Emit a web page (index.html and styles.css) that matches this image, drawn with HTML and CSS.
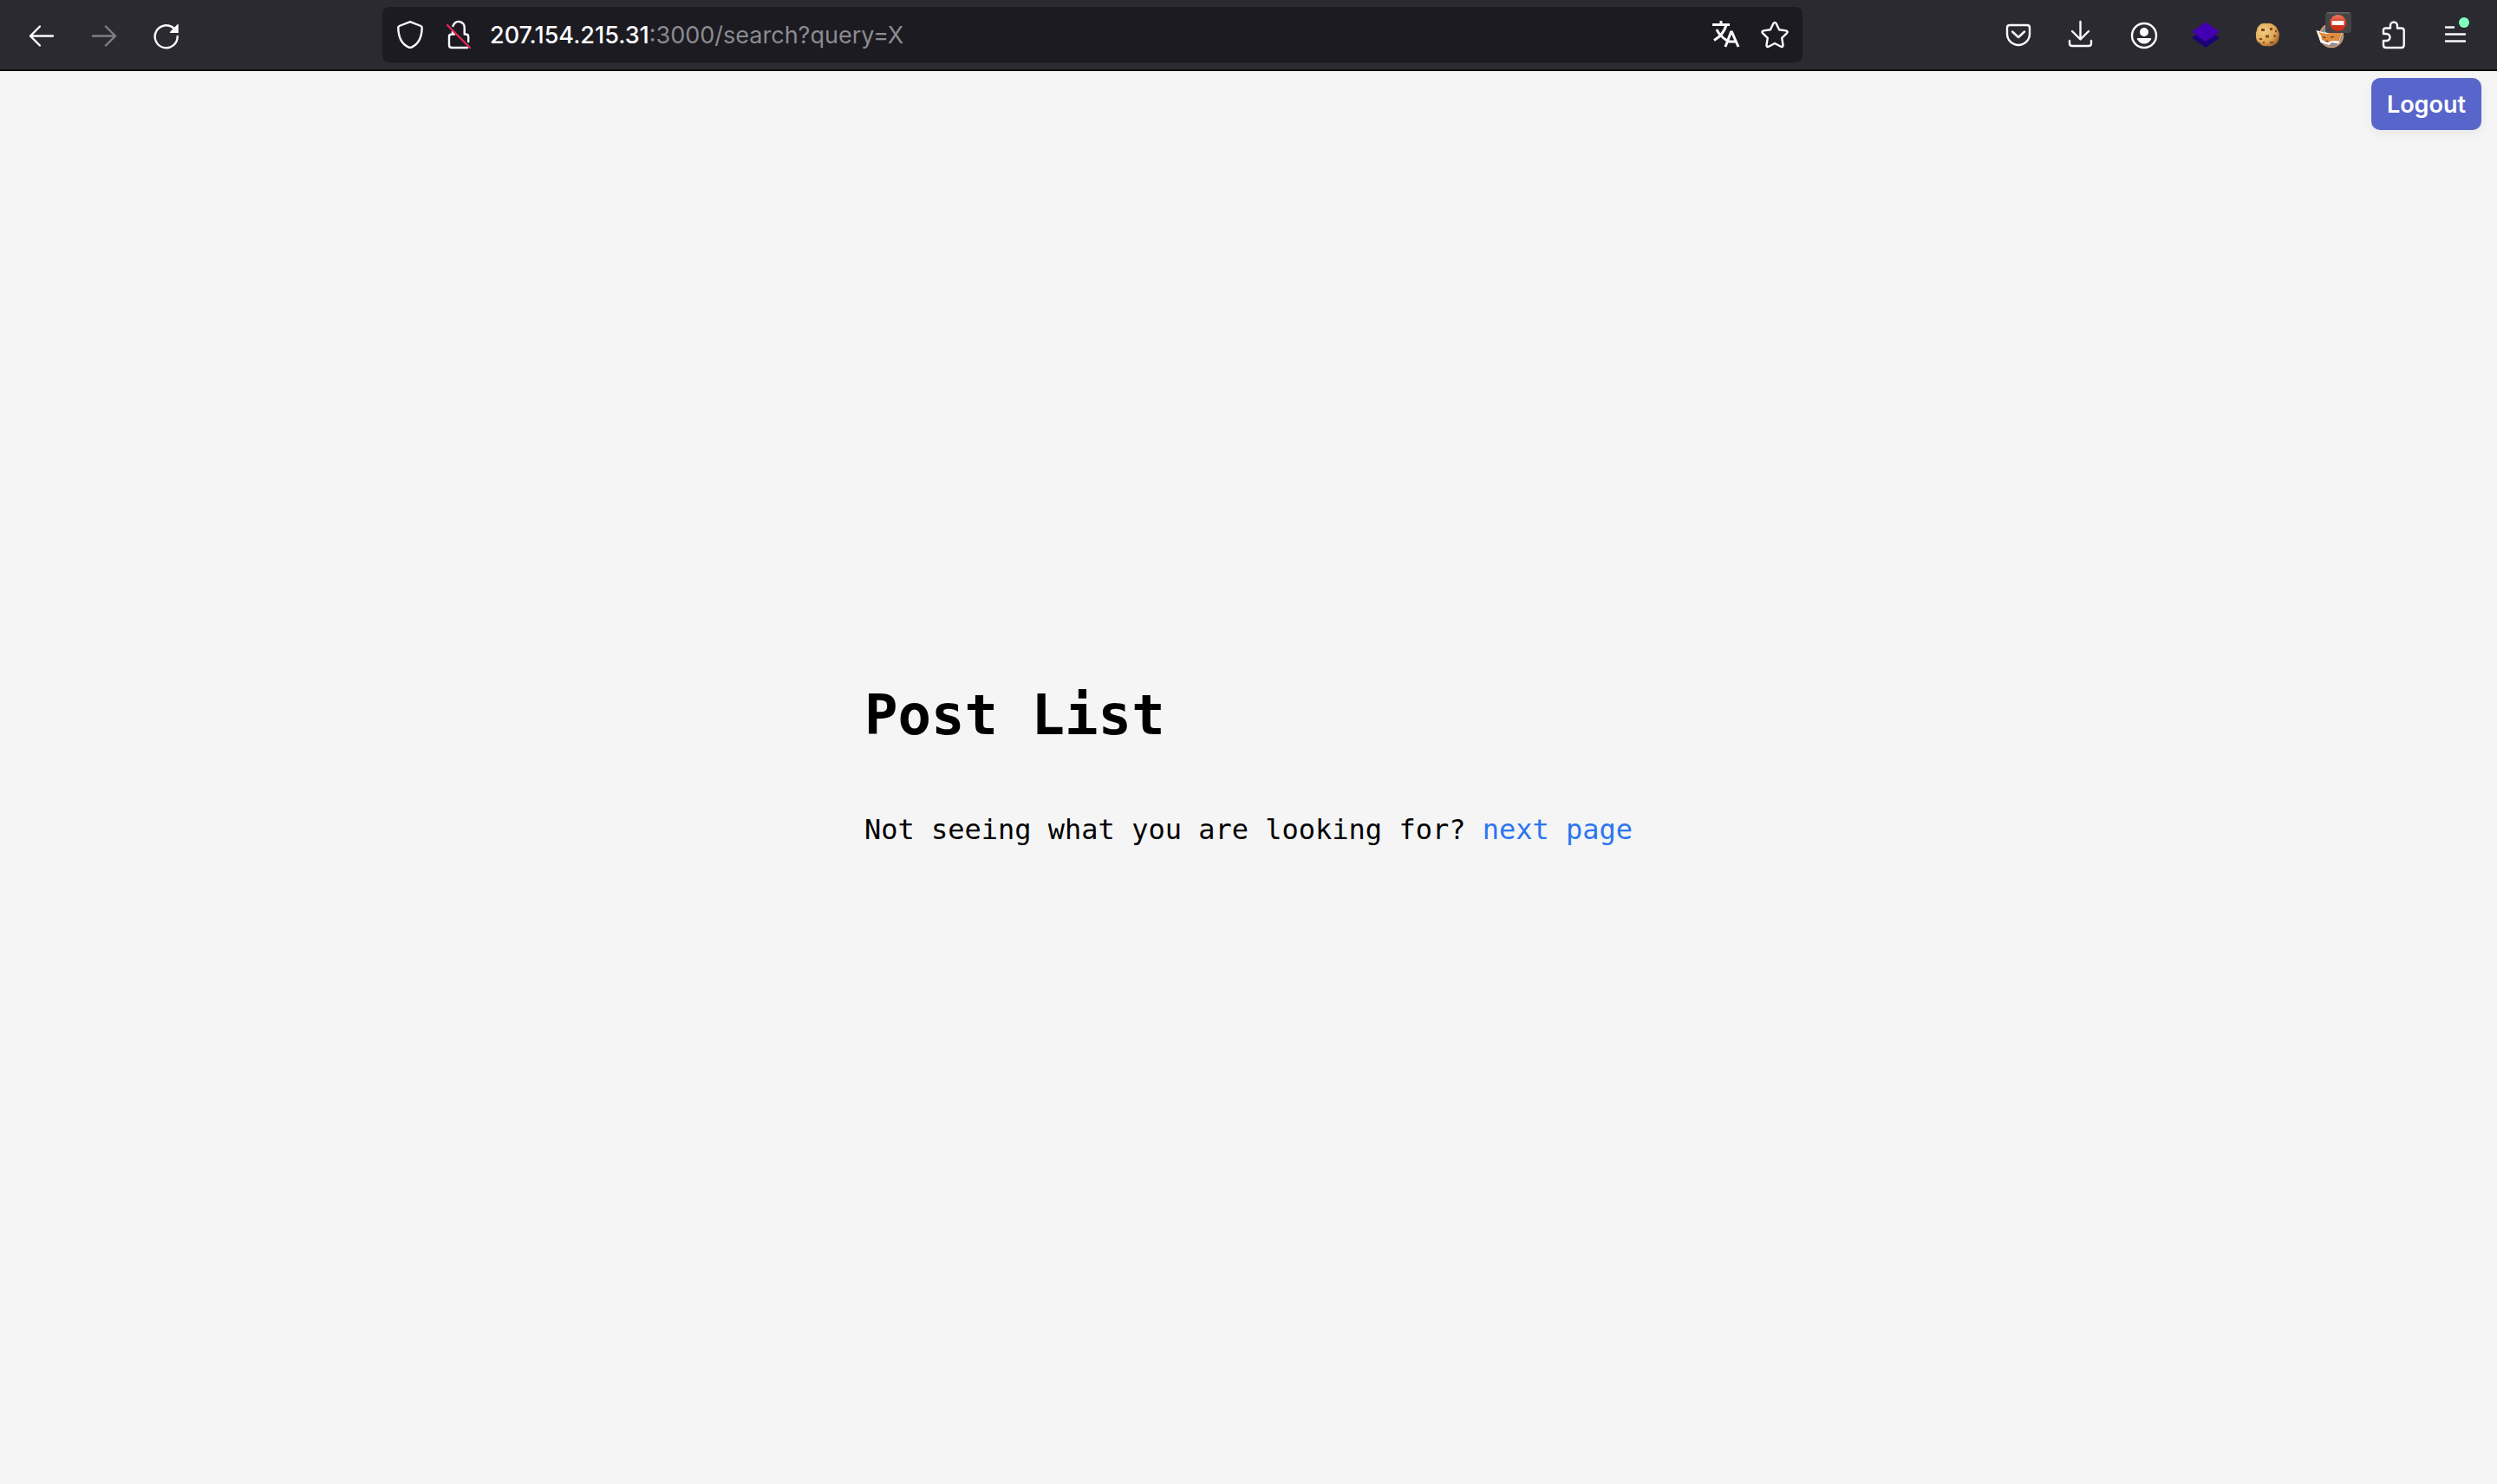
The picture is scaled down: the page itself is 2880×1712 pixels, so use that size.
FILE: index.html
```html
<!DOCTYPE html>
<html lang="en">
<head>
<meta charset="utf-8">
<title>Post List</title>
<link rel="stylesheet" href="styles.css">
</head>
<body>
<header class="toolbar">
  <nav class="tools" aria-label="Navigation">
    <button class="tool" aria-label="Back"><svg class="icon" viewBox="0 0 40 40"><path d="M33 21.500H7.500M18 10.500L7 21.500l11 11"/></svg></button>
    <button class="tool" aria-label="Forward" disabled><svg class="icon" viewBox="0 0 40 40"><path d="M7 21.500h25.500M22 10.500l11 11-11 11"/></svg></button>
    <button class="tool" aria-label="Reload"><svg class="icon" viewBox="0 0 40 40"><path d="M32.700 22A13 13 0 1 1 28.500 12.700"/><path class="solid" d="M33.800 8.500V18h-9.300q-1.200-.2-.3-1.300l8.300-8.400q1.200-.8 1.300.2z"/></svg></button>
  </nav>
  <div class="spacer"></div>
  <form class="urlbar">
    <button type="button" class="inner-tool" aria-label="Tracking protection"><svg class="icon" viewBox="0 0 40 40"><path d="M20 5.200L32.500 10q1.300.5 1.200 2C33.500 24 29 31 22 34.400q-2 1-4 0C11 31 6.500 24 6.300 12q-.1-1.500 1.200-2z"/></svg></button>
    <button type="button" class="inner-tool" aria-label="Connection not secure"><svg class="icon" viewBox="0 0 40 40"><path d="M13.500 10a6.700 6.700 0 0 1 13.200 2v7.500h1.500q3 0 3 3V28M15 19.500h-3q-3 0-3 3V32q0 3 3 3h18M13 16v3.500"/><path class="slash" d="M7 9l26 26"/></svg></button>
    <label class="address"><span class="host">207.154.215.31</span><input class="path" type="text" value=":3000/search?query=X" aria-label="Address"></label>
    <button type="button" class="inner-tool" aria-label="Translate"><svg class="icon glyph" viewBox="0 0 40 40"><path d="M4 8.500h20M14 4v4.500M20 9q-3 11-14 17.500M9 14q3 7 11.500 12.500M19 34l6.500-17h1L34 34M21.500 28h10"/></svg></button>
    <button type="button" class="inner-tool" aria-label="Bookmark"><svg class="icon" viewBox="0 0 40 40"><path d="M18.300 7.200q1.700-2.700 3.400 0l3.400 7.100 7.700 1.100q3 .7 1 3l-5.600 5.500 1.300 7.800q.2 3-2.500 2L20 30l-7 3.700q-2.700 1-2.500-2l1.300-7.800-5.600-5.500q-2-2.300 1-3l7.700-1.100z"/></svg></button>
  </form>
  <div class="spacer"></div>
  <nav class="tools" aria-label="Browser tools">
    <button class="tool" aria-label="Save to Pocket"><svg class="icon" viewBox="0 0 40 40"><path d="M10 9h20q3 0 3 3v7a13 13 0 0 1-26 0v-7q0-3 3-3z"/><path d="M13 16.500l7 6.500 7-6.500"/></svg></button>
    <button class="tool" aria-label="Downloads"><svg class="icon" viewBox="0 0 40 40"><path d="M19.500 5v20M10 16l9.500 9.500L29 16M7 27v3q0 3 3 3h19q3 0 3-3v-3"/></svg></button>
    <button class="tool" aria-label="Account"><svg class="icon" viewBox="0 0 40 40"><circle cx="21" cy="21" r="14"/><circle class="solid" cx="21" cy="17" r="5"/><path class="solid" d="M13.500 24h15q1.200.3.500 1.500-3 5-8 5t-8-5q-.7-1.200.500-1.500z"/></svg></button>
    <button class="tool" aria-label="Layers extension"><svg class="icon" viewBox="0 0 40 40"><path class="layer-low" d="M4 23.500L20 13l16 10.500L20 35z"/><path class="layer-top" d="M4 16.500L20 5.500l16 11L20 28z"/></svg></button>
    <button class="tool" aria-label="Cookie extension"><svg class="icon" viewBox="0 0 40 40">
      <defs><radialGradient id="dough" cx=".35" cy=".35" r=".7"><stop offset="0" stop-color="#f3cf84"/><stop offset=".65" stop-color="#dfa858"/><stop offset="1" stop-color="#aa6b2c"/></radialGradient></defs>
      <path fill="url(#dough)" stroke="none" d="M10 9q3-3 8-2 5-1 8 1.500 4 2 5 6 3 4 1.500 9-.5 6-5 8-4 3-9 1.500-5 1-8-3-5-3-4.500-8-1-4 1-7 .5-4 3-6z"/>
      <path class="chips" d="M12 13h4v3h-4zM22 12h3v3h-3zM17 20.500h4v3h-4zM10 24h3v2h-3zM26.500 20h2v3h-2zM22 28h4v2h-4zM28 15h2v2h-2zM14 28h2v2h-2z"/></svg></button>
    <button class="tool" aria-label="Fox proxy extension"><svg class="icon" viewBox="0 0 40 40">
      <circle cx="21" cy="21" r="13.500" fill="#8f8f94" stroke="#d59a6a" stroke-width="1.500"/>
      <path fill="#fff" stroke="none" d="M3.500 15l9 2.500 21-1.500-4 14.500-8-1.500-3 3-10-3-2-6z"/>
      <path fill="#e08a3c" stroke="none" d="M6 17l9 2 8-1.500 10-1-3 11-8-.5-5 2-7-3-1-5z"/>
      <path fill="#4b4140" stroke="none" d="M10 22l5 1-2 1.500zM20 22l5 0-4 2zM13 28l3-1.500 2 2z"/>
    </svg><svg class="badge" viewBox="0 0 30 24">
      <defs><linearGradient id="sign" x1="0" y1="0" x2="0" y2="1"><stop offset="0" stop-color="#f07a66"/><stop offset=".5" stop-color="#d9371f"/><stop offset="1" stop-color="#c92d13"/></linearGradient></defs>
      <rect width="30" height="24" rx="3" fill="#454547"/><path d="M2 .8h26" stroke="#68686b" stroke-width="1.500"/><circle cx="14.500" cy="12.500" r="9.500" fill="url(#sign)"/><path fill="#fff" d="M7.500 10h14v5h-14z"/></svg></button>
    <button class="tool" aria-label="Extensions"><svg class="icon" viewBox="0 0 40 40"><path d="M9 19v-4q0-2.500 2.500-2.500H17V9.500a4 4 0 0 1 8 0v3h5q2.700 0 2.700 2.700V32q0 3-3 3H12q-3 0-3-3v-5h3.500a4 4 0 0 0 0-8z"/></svg></button>
    <button class="tool" aria-label="Menu"><svg class="icon" viewBox="0 0 40 40"><path d="M9 11.500h9M9 19.500h22M9 27.500h22"/><circle cx="30" cy="6" r="6" fill="#80ffbf" stroke="none"/></svg></button>
  </nav>
</header>
<div class="page">
  <div class="account-bar"><button class="logout">Logout</button></div>
  <main class="content">
    <div class="posts">
      <h1 class="title">Post List</h1>
      <p class="hint">Not seeing what you are looking for? <a class="next" href="#">next page</a></p>
    </div>
  </main>
</div>
</body>
</html>
```
FILE: styles.css
```css
* { box-sizing: border-box; }

body {
  margin: 0;
  min-height: 100vh;
  display: flex;
  flex-direction: column;
  background: #f5f5f5;
  color: #000;
  font-family: "DejaVu Sans Mono", monospace;
}

button {
  border: 0;
  padding: 0;
  background: none;
  color: inherit;
  font: inherit;
}

.toolbar {
  display: flex;
  align-items: center;
  padding: 8px 12px;
  background: #2b2a31;
  border-bottom: 2px solid #0c0c0d;
  color: #fbfbfe;
  font-family: Inter, "Liberation Sans", sans-serif;
}

.tools { display: flex; }

.tool {
  position: relative;
  width: 72px;
  height: 64px;
  display: flex;
  align-items: center;
  justify-content: center;
}

.tool:disabled { opacity: 0.4; }

.spacer { flex: 66; }

.icon {
  display: block;
  width: 40px;
  height: 40px;
  overflow: visible;
  fill: none;
  stroke: currentColor;
  stroke-width: 2.4;
  stroke-linecap: round;
  stroke-linejoin: round;
}

.glyph { stroke-width: 3; stroke-linecap: butt; stroke-linejoin: miter; }
.solid { fill: currentColor; stroke: none; }
.slash { stroke: #e22850; }
.layer-low { fill: #1c0078; stroke: none; }
.layer-top { fill: #4300b0; stroke: none; }
.chips { fill: #80491f; stroke: none; }

.badge {
  position: absolute;
  top: 6px;
  right: 12px;
  width: 30px;
  height: 24px;
}

.urlbar {
  flex: 500;
  display: flex;
  align-items: center;
  gap: 16px;
  height: 64px;
  padding: 0 12px;
  border-radius: 8px;
  background: #1c1b21;
}

.address {
  flex: 1;
  display: flex;
  align-items: center;
  padding-top: 2px;
  font-size: 27px;
  line-height: 40px;
}

.host { font-weight: 500; }

.path {
  flex: 1;
  min-width: 0;
  height: 40px;
  padding: 0;
  border: 0;
  outline: 0;
  background: none;
  color: #8b8b90;
  font: inherit;
}

.page {
  flex: 1;
  display: flex;
  flex-direction: column;
}

.account-bar {
  display: flex;
  justify-content: flex-end;
  padding: 8px 18px 0;
}

.logout {
  padding: 11px 18px 9px;
  border-radius: 10px;
  background: #5865cb;
  box-shadow: 0 4px 12px rgba(0, 0, 0, 0.06);
  color: #fff;
  font: 600 27px/40px Inter, "Liberation Sans", sans-serif;
}

.content {
  flex: 1;
  display: flex;
  align-items: center;
  justify-content: center;
  padding-bottom: 98px;
}

.title {
  margin: 0 0 74px;
  font-size: 64px;
  line-height: 76px;
}

.hint {
  margin: 0;
  font-size: 32px;
  line-height: 40px;
}

.next {
  color: #2b76f0;
  text-decoration: none;
}
```
